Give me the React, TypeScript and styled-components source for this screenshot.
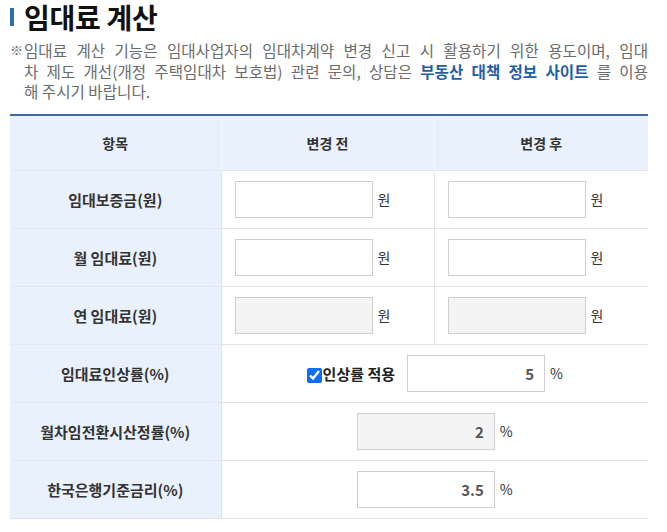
import React from 'react';
import styled, { createGlobalStyle } from 'styled-components';

const GlobalStyle = createGlobalStyle`
  body {
    margin: 0;
    background: #fff;
    font-family: "Noto Sans CJK KR", "Noto Sans", sans-serif;
  }
`;

const Page = styled.div`
  width: 638px;
  padding: 0 10px;
`;

const Title = styled.h2`
  display: flex;
  align-items: center;
  gap: 10px;
  margin: -1px 0 0;
  height: 36px;
  line-height: 36px;
  font-size: 28px;
  font-weight: 700;
  color: #111;
  letter-spacing: -0.3px;

  &::before {
    content: '';
    width: 4px;
    height: 18px;
    background: #2f6db3;
  }
`;

const Note = styled.div`
  display: flex;
  margin-top: 5px;
  font-size: 15.6px;
  line-height: 20.5px;
  color: #6b6b6b;
`;

const Mark = styled.span`
  flex: none;
  width: 14px;
  font-size: 13px;
`;

const NoteBody = styled.div`
  flex: 1;
`;

const NoteLine = styled.div<{ $fill?: boolean }>`
  white-space: nowrap;
  text-align: left;
  text-align-last: ${(p) => (p.$fill ? 'justify' : 'left')};
`;

const NoteLink = styled.a`
  color: #1f5ea6;
  font-weight: 700;
  text-decoration: none;
`;

const Table = styled.table`
  width: 638px;
  margin-top: 12px;
  border-collapse: collapse;
  table-layout: fixed;
  border-top: 2px solid #3b6c9b;
  border-bottom: 1px solid #e3e3e3;
`;

const HeadCell = styled.th`
  height: 54px;
  padding: 0;
  background: #e9f1fc;
  border-left: 1px solid #f3f7fd;
  font-size: 14px;
  font-weight: 700;
  color: #333;
  text-align: center;

  &:first-child {
    border-left: 0;
  }
`;

const LabelCell = styled.th`
  height: 57px;
  padding: 0;
  background: #e9f1fc;
  border-top: 1px solid #dfe8f4;
  border-right: 1px solid #dbe3ee;
  font-size: 15px;
  font-weight: 700;
  color: #333;
  text-align: center;
`;

const Cell = styled.td<{ $center?: boolean }>`
  height: 57px;
  padding: 0 0 0 ${(p) => (p.$center ? 0 : 13)}px;
  border-top: 1px solid #e3e3e3;
  border-left: 1px solid #e3e3e3;
  text-align: ${(p) => (p.$center ? 'center' : 'left')};
  white-space: nowrap;
`;

const Field = styled.input`
  box-sizing: border-box;
  width: 138px;
  height: 37px;
  padding: 0 10px;
  border: 1px solid #cfcfcf;
  border-radius: 0;
  background: ${(p) => (p.disabled ? '#f4f4f4' : '#fff')};
  font-family: inherit;
  font-size: 15px;
  font-weight: 700;
  color: #555;
  text-align: right;
  vertical-align: middle;
  outline: none;
`;

const Unit = styled.span`
  margin-left: 5px;
  font-size: 14px;
  color: #333;
  vertical-align: middle;
`;

const Check = styled.label`
  display: inline-flex;
  align-items: center;
  margin-right: 12px;
  font-size: 15px;
  font-weight: 700;
  color: #222;
  vertical-align: middle;

  input {
    width: 15px;
    height: 15px;
    margin: 4px 1px 0 0;
    accent-color: #0b6ef5;
  }
`;

type MoneyRow = { label: string; disabled?: boolean };

const moneyRows: MoneyRow[] = [
  { label: '임대보증금(원)' },
  { label: '월 임대료(원)' },
  { label: '연 임대료(원)', disabled: true },
];

const App: React.FC = () => {
  return (
    <Page>
      <GlobalStyle />
      <Title>임대료 계산</Title>
      <Note>
        <Mark>※</Mark>
        <NoteBody>
          <NoteLine $fill>
            임대료 계산 기능은 임대사업자의 임대차계약 변경 신고 시 활용하기 위한 용도이며, 임대
          </NoteLine>
          <NoteLine $fill>
            차 제도 개선(개정 주택임대차 보호법) 관련 문의, 상담은 <NoteLink href="#">부동산 대책 정보 사이트</NoteLink> 를 이용
          </NoteLine>
          <NoteLine>해 주시기 바랍니다.</NoteLine>
        </NoteBody>
      </Note>
      <Table>
        <colgroup>
          <col style={{ width: 211 }} />
          <col style={{ width: 213 }} />
          <col style={{ width: 214 }} />
        </colgroup>
        <thead>
          <tr>
            <HeadCell>항목</HeadCell>
            <HeadCell>변경 전</HeadCell>
            <HeadCell>변경 후</HeadCell>
          </tr>
        </thead>
        <tbody>
          {moneyRows.map((row) => (
            <tr key={row.label}>
              <LabelCell>{row.label}</LabelCell>
              <Cell>
                <Field disabled={row.disabled} />
                <Unit>원</Unit>
              </Cell>
              <Cell>
                <Field disabled={row.disabled} />
                <Unit>원</Unit>
              </Cell>
            </tr>
          ))}
          <tr>
            <LabelCell>임대료인상률(%)</LabelCell>
            <Cell colSpan={2} $center>
              <Check>
                <input type="checkbox" defaultChecked />
                인상률 적용
              </Check>
              <Field defaultValue="5" />
              <Unit>%</Unit>
            </Cell>
          </tr>
          <tr>
            <LabelCell>월차임전환시산정률(%)</LabelCell>
            <Cell colSpan={2} $center>
              <Field disabled defaultValue="2" />
              <Unit>%</Unit>
            </Cell>
          </tr>
          <tr>
            <LabelCell>한국은행기준금리(%)</LabelCell>
            <Cell colSpan={2} $center>
              <Field defaultValue="3.5" />
              <Unit>%</Unit>
            </Cell>
          </tr>
        </tbody>
      </Table>
    </Page>
  );
};

export default App;
